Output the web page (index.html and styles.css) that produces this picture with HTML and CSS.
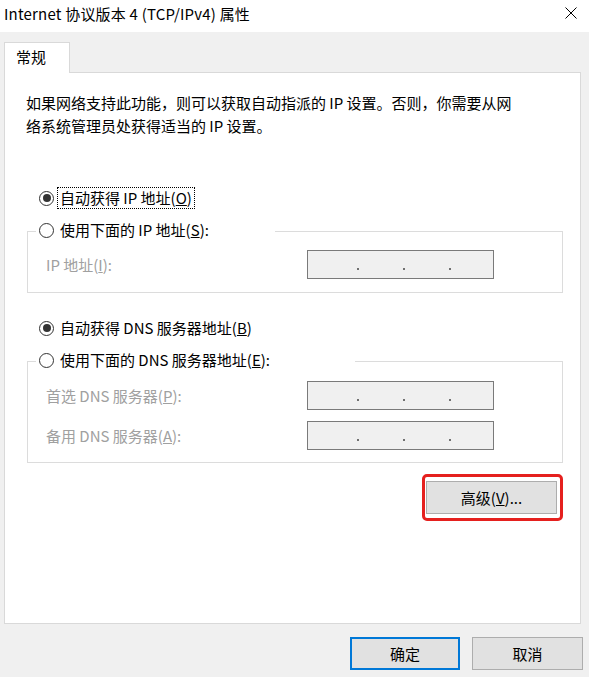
FILE: index.html
```html
<!DOCTYPE html>
<html lang="zh-CN">
<head>
<meta charset="utf-8">
<title>Internet 协议版本 4 (TCP/IPv4) 属性</title>
<link rel="stylesheet" href="styles.css">
</head>
<body>
<div class="window">
  <div class="titlebar">
    <span class="title">Internet 协议版本 4 (TCP/IPv4) 属性</span>
    <svg class="close" width="12" height="12" viewBox="0 0 12 12"><path d="M0.5 0.5 L11.5 11.5 M11.5 0.5 L0.5 11.5" stroke="#000" stroke-width="1" fill="none"/></svg>
  </div>
  <div class="tabs"><div class="tab">常规</div></div>
  <div class="panel">
    <p class="intro">如果网络支持此功能，则可以获取自动指派的 IP 设置。否则，你需要从网<br>络系统管理员处获得适当的 IP 设置。</p>

    <div class="radio-row first">
      <span class="radio checked"></span><span class="label focus">自动获得 IP 地址(<u>O</u>)</span>
    </div>
    <div class="group g1">
      <div class="legend l1"><span class="radio"></span><span class="label">使用下面的 IP 地址(<u>S</u>):</span></div>
      <div class="field"><span class="flabel">IP 地址(<u>I</u>):</span><div class="ipbox"><i></i><i></i><i></i></div></div>
    </div>

    <div class="radio-row third">
      <span class="radio checked"></span><span class="label">自动获得 DNS 服务器地址(<u>B</u>)</span>
    </div>
    <div class="group g2">
      <div class="legend l2"><span class="radio"></span><span class="label">使用下面的 DNS 服务器地址(<u>E</u>):</span></div>
      <div class="field"><span class="flabel">首选 DNS 服务器(<u>P</u>):</span><div class="ipbox"><i></i><i></i><i></i></div></div>
      <div class="field"><span class="flabel">备用 DNS 服务器(<u>A</u>):</span><div class="ipbox"><i></i><i></i><i></i></div></div>
    </div>

    <div class="adv-row">
      <div class="highlight"><button class="btn adv">高级(<u>V</u>)...</button></div>
    </div>
  </div>
  <div class="footer">
    <button class="btn ok">确定</button>
    <button class="btn cancel">取消</button>
  </div>
</div>
</body>
</html>
```
FILE: styles.css
```css
* { box-sizing: border-box; }
html, body { margin: 0; padding: 0; }
body {
  width: 589px;
  height: 677px;
  background: #f0f0f0;
  font-family: "Noto Sans CJK SC", "Noto Sans", sans-serif;
  font-size: 15px;
  color: #000;
  overflow: hidden;
}
.window { width: 589px; height: 677px; }

.titlebar {
  height: 32px;
  background: #fff;
  display: flex;
  align-items: flex-start;
  justify-content: space-between;
  padding-left: 4px;
}
.title { line-height: 28px; white-space: nowrap; letter-spacing: 0.2px; }
.close { margin-top: 7px; margin-right: 12px; }

.tabs { padding: 10px 0 0 4px; display: flex; }
.tab {
  position: relative;
  z-index: 1;
  width: 66px;
  height: 31px;
  margin-bottom: -1px;
  background: #fff;
  border: 1px solid #d9d9d9;
  border-bottom: none;
  padding-left: 11px;
  line-height: 28px;
}

.panel {
  margin: 0 8px 0 4px;
  height: 552px;
  background: #fff;
  border: 1px solid #d9d9d9;
  padding: 0 17px 0 0;
}

.intro {
  margin: 18px 0 0 21px;
  line-height: 23px;
}

.radio-row {
  display: flex;
  align-items: center;
  height: 20px;
  margin-left: 34px;
}
.radio-row.first { margin-top: 51px; }
.radio-row.third { margin-top: 25px; }

.radio {
  width: 15px;
  height: 15px;
  border: 1px solid #333;
  border-radius: 50%;
  background: #fff;
  display: flex;
  align-items: center;
  justify-content: center;
  flex: none;
}
.radio.checked::after {
  content: "";
  width: 8px;
  height: 8px;
  border-radius: 50%;
  background: #333;
}
.label {
  margin-left: 4px;
  padding: 0 2px;
  line-height: 20px;
  white-space: nowrap;
}
.label.focus { outline: 1px dotted #000; outline-offset: 0; }

.group {
  margin-left: 22px;
  border: 1px solid #dcdcdc;
  padding: 0 0 12px 18px;
}
.g1 { margin-top: 23px; padding-bottom: 13px; }
.g2 { margin-top: 23px; }

.legend {
  display: flex;
  align-items: center;
  height: 20px;
  margin: -12px 0 0 -10px;
  padding-left: 3px;
  background: #fff;
}
.l1 { width: 239px; }
.l2 { width: 319px; }

.field {
  display: flex;
  align-items: center;
  margin-top: 10px;
}
.g2 .field { margin-top: 11px; }
.flabel {
  width: 261px;
  color: #a0a0a0;
  white-space: nowrap;
}
.ipbox {
  width: 187px;
  height: 29px;
  border: 1px solid #7a7a7a;
  background: #f0f0f0;
  display: flex;
  gap: 44px;
  padding: 17px 0 0 49px;
}
.ipbox i {
  display: block;
  width: 2px;
  height: 2px;
  background: #707070;
}

.adv-row {
  display: flex;
  justify-content: flex-end;
  margin-top: 11px;
}
.highlight {
  border: 3px solid #e5201e;
  border-radius: 5px;
  padding: 4px 3px 4px 1px;
}

.btn {
  font-family: inherit;
  font-size: 15px;
  color: #000;
  background: #e1e1e1;
  border: 1px solid #adadad;
  height: 33px;
  padding: 0;
  line-height: 20px;
}
.adv { width: 131px; display: block; }
.footer {
  display: flex;
  justify-content: flex-end;
  gap: 12px;
  margin-top: 13px;
  padding-right: 6px;
}
.ok { width: 110px; border: 2px solid #0078d7; }
.cancel { width: 111px; }
```
